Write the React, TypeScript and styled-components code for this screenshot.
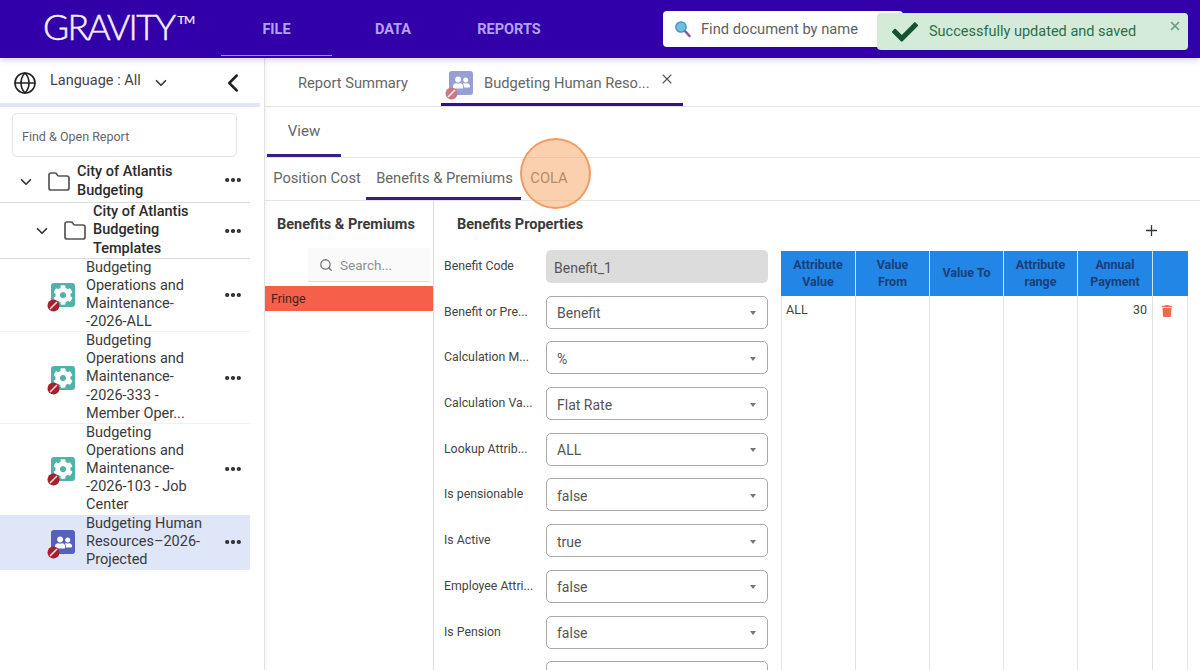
import styled, { createGlobalStyle } from "styled-components"
import { ChevronDown, ChevronLeft, Ellipsis, Folder, Globe, Plus, Search, X } from "lucide-react"
import { FaCheck, FaCog, FaTrash, FaUserFriends } from "react-icons/fa"

const GlobalStyle = createGlobalStyle`
  html, body {
    margin: 0;
    padding: 0;
    height: 670px;
    overflow: hidden;
    background: #fff;
    font-family: Roboto, "Liberation Sans", sans-serif;
  }
  * { box-sizing: border-box; }
`

const Page = styled.div`
  width: 1200px;
  height: 670px;
  display: flex;
  flex-direction: column;
  overflow: hidden;
  position: relative;
`

const Header = styled.header`
  height: 58px;
  flex: none;
  background: #3200a8;
  display: flex;
  align-items: stretch;
  padding-left: 43px;
  box-shadow: 0 2px 6px rgba(80, 70, 200, 0.25);
  position: relative;
  z-index: 2;
`

const Logo = styled.div`
  width: 178px;
  color: #f4effc;
  font-family: Lato, sans-serif;
  font-weight: 300;
  -webkit-text-stroke: 0.55px #f4effc;
  font-size: 35.5px;
  letter-spacing: -1.7px;
  line-height: 54px;
  white-space: nowrap;

  & sup {
    font-size: 12px;
    font-weight: 400;
    letter-spacing: -0.5px;
    margin-left: 3px;
    vertical-align: 16px;
    line-height: 0;
    -webkit-text-stroke: 0.2px #f4effc;
  }
`

const Nav = styled.nav`
  display: flex;
  width: 442px;
`

const NavItem = styled.div<{ $width: number; $active?: boolean }>`
  width: ${(p) => p.$width}px;
  height: 56px;
  display: flex;
  align-items: center;
  justify-content: center;
  padding-top: 3px;
  color: #b5a0f2;
  font-size: 14.5px;
  font-weight: 700;
  border-bottom: 1px solid ${(p) => (p.$active ? "#a78ce8" : "transparent")};
`

const TopSearch = styled.div`
  width: 240px;
  height: 36px;
  margin-top: 11px;
  background: #fff;
  border-radius: 4px;
  display: flex;
  align-items: center;
  gap: 9px;
  padding-left: 11px;
  color: #5f5f5f;
  font-size: 14.7px;
`

const Toast = styled.div`
  position: absolute;
  left: 877px;
  top: 13px;
  width: 311px;
  height: 37px;
  background: #d4ebd9;
  border-radius: 4px;
  display: flex;
  align-items: center;
  padding-left: 15px;
  gap: 11px;
  color: #2c6e49;
  font-size: 14.5px;
  z-index: 3;
`

const ToastClose = styled(X)`
  position: absolute;
  right: 6px;
  top: 6px;
  color: #6f9d83;
`

const Body = styled.div`
  flex: 1;
  display: flex;
  min-height: 0;
`

const Sidebar = styled.aside`
  width: 265px;
  flex: none;
  border-right: 1px solid #e2e2e2;
  box-shadow: 1px 0 3px rgba(0, 0, 0, 0.05);
`

const LanguageRow = styled.div`
  height: 49px;
  width: 260px;
  display: flex;
  align-items: center;
  padding: 4px 0 0 13px;
  border-bottom: 4px solid #e0e6f5;
  color: #444;
  font-size: 14.5px;
`

const LanguageText = styled.span`
  margin: 0 11px 4px 13px;
`

const Collapse = styled(ChevronLeft)`
  margin-left: 48px;
  color: #222;
`

const FindReport = styled.div`
  width: 225px;
  height: 44px;
  margin: 6px 0 0 12px;
  border: 1px solid #e4e4e4;
  border-radius: 5px;
  display: flex;
  align-items: center;
  padding: 2px 0 0 9px;
  color: #666;
  font-size: 12.5px;
`

const Tree = styled.div`
  width: 250px;
`

const TreeRow = styled.div<{ $height: number; $selected?: boolean; $line?: string; $pad?: number }>`
  height: ${(p) => p.$height}px;
  display: flex;
  align-items: center;
  padding-top: ${(p) => p.$pad || 0}px;
  background: ${(p) => (p.$selected ? "#dfe6f8" : "transparent")};
  border-bottom: 1px solid ${(p) => p.$line || "transparent"};
  position: relative;
`

const FolderCell = styled.div<{ $indent: number }>`
  width: ${(p) => p.$indent}px;
  flex: none;
  display: flex;
  align-items: center;
  justify-content: flex-end;
  gap: 12px;
  color: #333;
`

const ItemCell = styled.div`
  width: 86px;
  flex: none;
  display: flex;
  justify-content: flex-end;
  padding-right: 11px;
`

const TreeLabel = styled.div<{ $strong?: boolean; $width: number }>`
  width: ${(p) => p.$width}px;
  color: ${(p) => (p.$strong ? "#2b2b2b" : "#3a3a3a")};
  font-size: 14.5px;
  font-weight: ${(p) => (p.$strong ? 500 : 400)};
  line-height: 18.2px;
  padding-left: ${(p) => (p.$strong ? 6 : 0)}px;
`

const RowMenu = styled(Ellipsis)`
  position: absolute;
  left: 223px;
  top: 50%;
  transform: translateY(-50%);
  color: #222;
  stroke-width: 3;
`

const ReportTile = styled.div<{ $bg: string; $muted?: boolean }>`
  position: relative;
  flex: none;
  width: 24px;
  height: 24px;
  border-radius: 3px;
  background: ${(p) => p.$bg};
  display: flex;
  align-items: center;
  justify-content: center;
  color: #fff;
  opacity: ${(p) => (p.$muted ? 0.6 : 1)};
`

const BanBadge = styled.svg`
  position: absolute;
  left: -4px;
  bottom: -5px;
`

const Main = styled.main`
  flex: 1;
  min-width: 0;
  display: flex;
  flex-direction: column;
  position: relative;
`

const DocTabs = styled.div`
  height: 49px;
  flex: none;
  display: flex;
  border-bottom: 1px solid #e2e2e2;
  padding-left: 33px;
  color: #666;
  font-size: 14.7px;
`

const DocTab = styled.div<{ $active?: boolean }>`
  height: 48px;
  display: flex;
  align-items: center;
  position: relative;
  white-space: nowrap;
  padding-top: 4px;
  ${(p) =>
    p.$active
      ? `width: 242px; margin-left: 34px; padding-left: 8px; gap: 11px; border-bottom: 3px solid #32128c;`
      : `width: 109px; padding-top: 2px;`}
`

const TabClose = styled(X)`
  position: absolute;
  left: 218px;
  top: 13px;
  color: #555;
`

const ViewBar = styled.div`
  height: 51px;
  flex: none;
  padding-left: 2px;
  border-bottom: 1px solid #e5e5e5;
`

const ViewTab = styled.div`
  width: 74px;
  height: 50px;
  display: flex;
  align-items: center;
  justify-content: center;
  padding-top: 1px;
  border-bottom: 3px solid #3a1d8a;
  color: #666;
  font-size: 15px;
`

const SubTabs = styled.div`
  height: 43px;
  flex: none;
  display: flex;
  padding-left: 1px;
  border-bottom: 1px solid #e5e5e5;
  color: #666;
  font-size: 14.7px;
`

const SubTab = styled.div<{ $width: number; $active?: boolean }>`
  width: ${(p) => p.$width}px;
  height: 42px;
  display: flex;
  align-items: center;
  justify-content: center;
  padding: 1px 0 0 2px;
  border-bottom: 3px solid ${(p) => (p.$active ? "#3a1d8a" : "transparent")};
`

const Highlight = styled.div`
  position: absolute;
  left: 255px;
  top: 80px;
  width: 71px;
  height: 71px;
  border-radius: 50%;
  background: rgba(245, 170, 110, 0.55);
  border: 2px solid rgba(240, 150, 90, 0.9);
`

const Content = styled.div`
  flex: 1;
  min-height: 0;
  display: flex;
`

const BenefitList = styled.section`
  width: 169px;
  flex: none;
  border-right: 1px solid #dcdcdc;
`

const SectionTitle = styled.h3`
  margin: 0;
  font-size: 14.5px;
  font-weight: 700;
  color: #3a3a3a;
`

const ListTitle = styled(SectionTitle)`
  padding: 15px 0 0 12px;
  height: 47px;
`

const ListSearch = styled.div`
  width: 122px;
  height: 34px;
  margin-left: 43px;
  padding-left: 11px;
  display: flex;
  align-items: center;
  gap: 7px;
  background: #fafafa;
  border-bottom: 1px solid #ddd;
  color: #8f8f8f;
  font-size: 13.5px;
`

const FringeRow = styled.div`
  height: 25px;
  margin-top: 4px;
  background: #f4604a;
  padding-left: 6px;
  display: flex;
  align-items: center;
  color: #4a2018;
  font-size: 12.5px;
`

const Properties = styled.section`
  flex: 1;
  min-width: 0;
  display: flex;
  flex-direction: column;
  padding: 15px 12px 0 10px;
`

const PropertiesHead = styled.div`
  height: 34px;
  flex: none;
  display: flex;
  justify-content: space-between;
  padding-left: 13px;
`

const AddIcon = styled(Plus)`
  margin: 6px 28px 0 0;
  color: #333;
`

const Columns = styled.div`
  flex: 1;
  min-height: 0;
  display: flex;
  gap: 13px;
`

const Form = styled.div`
  width: 324px;
  flex: none;
  display: flex;
  flex-direction: column;
  gap: 12.7px;
`

const Field = styled.div`
  display: flex;
  align-items: flex-start;
`

const FieldLabel = styled.label`
  width: 102px;
  flex: none;
  padding-top: 9px;
  color: #444;
  font-size: 12.3px;
  line-height: 15px;
`

const DisabledInput = styled.div`
  width: 222px;
  height: 33px;
  background: #dcdcdc;
  border-radius: 5px;
  padding: 2px 0 0 8px;
  display: flex;
  align-items: center;
  color: #555;
  font-size: 14px;
`

const Select = styled.div`
  width: 222px;
  height: 33px;
  border: 1px solid #a9a9a9;
  border-radius: 5px;
  padding: 2px 11px 0 10px;
  display: flex;
  align-items: center;
  justify-content: space-between;
  color: #555;
  font-size: 14px;
`

const Caret = styled.span`
  width: 0;
  height: 0;
  border-left: 3.5px solid transparent;
  border-right: 3.5px solid transparent;
  border-top: 4px solid #777;
`

const Grid = styled.div`
  width: 407px;
  flex: none;
  height: 440px;
  margin-top: 1px;
  display: flex;
  flex-direction: column;
`

const GridHead = styled.div`
  height: 45px;
  flex: none;
  display: flex;
  background: #2286e6;
`

const HeadCell = styled.div<{ $width: number }>`
  width: ${(p) => p.$width}px;
  flex: none;
  display: flex;
  align-items: center;
  justify-content: center;
  text-align: center;
  border-right: 1px solid #cfe5fa;
  color: #1a3f78;
  font-size: 12.5px;
  font-weight: 700;
  line-height: 16.5px;
  &:last-child { border-right: none; }
`

const GridRow = styled.div`
  flex: 1;
  display: flex;
  border-left: 1px solid #e3e3e3;
  border-right: 1px solid #e3e3e3;
`

const BodyCell = styled.div<{ $width: number; $right?: boolean }>`
  width: ${(p) => p.$width}px;
  flex: none;
  padding: 6px 5px 0 4px;
  border-right: 1px solid #e3e3e3;
  color: #444;
  font-size: 12.5px;
  line-height: 15px;
  text-align: ${(p) => (p.$right ? "right" : "left")};
  &:last-child { border-right: none; }
`

const Trash = styled(FaTrash)`
  margin: 3px 0 0 4px;
  color: #ee6a50;
`

const columns = [
  { title: ["Attribute", "Value"], width: 75 },
  { title: ["Value", "From"], width: 74 },
  { title: ["Value To"], width: 74 },
  { title: ["Attribute", "range"], width: 74 },
  { title: ["Annual", "Payment"], width: 75 },
  { title: [], width: 35 },
]

const fields = [
  { label: "Benefit or Pre...", value: "Benefit" },
  { label: "Calculation M...", value: "%" },
  { label: "Calculation Va...", value: "Flat Rate" },
  { label: "Lookup Attrib...", value: "ALL" },
  { label: "Is pensionable", value: "false" },
  { label: "Is Active", value: "true" },
  { label: "Employee Attri...", value: "false" },
  { label: "Is Pension", value: "false" },
  { label: "", value: "" },
]

const reports = [
  { lines: ["Budgeting", "Operations and", "Maintenance-", "-2026-ALL"], height: 73, line: "#f0f0f0" },
  { lines: ["Budgeting", "Operations and", "Maintenance-", "-2026-333 -", "Member Oper..."], height: 92, line: "#f0f0f0" },
  { lines: ["Budgeting", "Operations and", "Maintenance-", "-2026-103 - Job", "Center"], height: 91, line: "transparent" },
]

const Lines = ({ lines }: { lines: string[] }) => (
  <>
    {lines.map((l) => (
      <div key={l}>{l}</div>
    ))}
  </>
)

const ReportIcon = ({ kind, muted }: { kind: "gear" | "people"; muted?: boolean }) => (
  <ReportTile $bg={kind === "gear" ? "#4fb3a8" : "#5561bb"} $muted={muted}>
    {kind === "gear" ? <FaCog size={20} /> : <FaUserFriends size={17} />}
    <BanBadge width="13" height="13" viewBox="0 0 13 13">
      <circle cx="6.5" cy="6.5" r="6" fill="#a8202e" />
      <line x1="3" y1="10" x2="10" y2="3" stroke="#f3dfe0" strokeWidth="1.6" />
    </BanBadge>
  </ReportTile>
)

const Magnifier = () => (
  <svg width="18" height="18" viewBox="0 0 18 18">
    <line x1="10.5" y1="10.5" x2="15.5" y2="16" stroke="#8a5a9a" strokeWidth="2.6" strokeLinecap="round" />
    <circle cx="7" cy="7" r="5.2" fill="#6cc0e4" stroke="#4a8fb8" strokeWidth="1.3" />
  </svg>
)

export default function App() {
  return (
    <Page>
      <GlobalStyle />
      <Header>
        <Logo>
          GRAVITY<sup>TM</sup>
        </Logo>
        <Nav>
          <NavItem $width={111} $active>FILE</NavItem>
          <NavItem $width={122}>DATA</NavItem>
          <NavItem $width={110}>REPORTS</NavItem>
        </Nav>
        <TopSearch>
          <Magnifier />
          Find document by name
        </TopSearch>
      </Header>
      <Toast>
        <FaCheck size={26} color="#14532d" />
        Successfully updated and saved
        <ToastClose size={14} strokeWidth={3} />
      </Toast>

      <Body>
        <Sidebar>
          <LanguageRow>
            <Globe size={24} strokeWidth={1.6} color="#222" />
            <LanguageText>Language : All</LanguageText>
            <ChevronDown size={18} strokeWidth={2.2} color="#333" />
            <Collapse size={30} strokeWidth={2} />
          </LanguageRow>
          <FindReport>Find &amp; Open Report</FindReport>
          <Tree>
            <TreeRow $height={46} $pad={4} $line="#dcdcdc">
              <FolderCell $indent={71}>
                <ChevronDown size={18} strokeWidth={2.2} />
                <Folder size={24} strokeWidth={1.7} color="#555" />
              </FolderCell>
              <TreeLabel $strong $width={130}>
                <Lines lines={["City of Atlantis", "Budgeting"]} />
              </TreeLabel>
              <RowMenu size={20} />
            </TreeRow>
            <TreeRow $height={56} $line="#dcdcdc">
              <FolderCell $indent={87}>
                <ChevronDown size={18} strokeWidth={2.2} />
                <Folder size={24} strokeWidth={1.7} color="#555" />
              </FolderCell>
              <TreeLabel $strong $width={125}>
                <Lines lines={["City of Atlantis", "Budgeting", "Templates"]} />
              </TreeLabel>
              <RowMenu size={20} />
            </TreeRow>
            {reports.map((r) => (
              <TreeRow key={r.lines.join()} $height={r.height} $line={r.line}>
                <ItemCell>
                  <ReportIcon kind="gear" />
                </ItemCell>
                <TreeLabel $width={125}>
                  <Lines lines={r.lines} />
                </TreeLabel>
                <RowMenu size={20} />
              </TreeRow>
            ))}
            <TreeRow $height={55} $selected>
              <ItemCell>
                <ReportIcon kind="people" />
              </ItemCell>
              <TreeLabel $width={125}>
                <Lines lines={["Budgeting Human", "Resources–2026-", "Projected"]} />
              </TreeLabel>
              <RowMenu size={20} />
            </TreeRow>
          </Tree>
        </Sidebar>

        <Main>
          <DocTabs>
            <DocTab>Report Summary</DocTab>
            <DocTab $active>
              <ReportIcon kind="people" muted />
              Budgeting Human Reso...
              <TabClose size={16} strokeWidth={1.6} />
            </DocTab>
          </DocTabs>
          <ViewBar>
            <ViewTab>View</ViewTab>
          </ViewBar>
          <SubTabs>
            <SubTab $width={100}>Position Cost</SubTab>
            <SubTab $width={155} $active>Benefits &amp; Premiums</SubTab>
            <SubTab $width={54}>COLA</SubTab>
          </SubTabs>
          <Highlight />
          <Content>
            <BenefitList>
              <ListTitle>Benefits &amp; Premiums</ListTitle>
              <ListSearch>
                <Search size={14} color="#777" strokeWidth={2.2} />
                Search...
              </ListSearch>
              <FringeRow>Fringe</FringeRow>
            </BenefitList>
            <Properties>
              <PropertiesHead>
                <SectionTitle>Benefits Properties</SectionTitle>
                <AddIcon size={17} strokeWidth={1.8} />
              </PropertiesHead>
              <Columns>
                <Form>
                  <Field>
                    <FieldLabel>Benefit Code</FieldLabel>
                    <DisabledInput>Benefit_1</DisabledInput>
                  </Field>
                  {fields.map((f, i) => (
                    <Field key={i}>
                      <FieldLabel>{f.label}</FieldLabel>
                      <Select>
                        {f.value}
                        <Caret />
                      </Select>
                    </Field>
                  ))}
                </Form>
                <Grid>
                  <GridHead>
                    {columns.map((c, i) => (
                      <HeadCell key={i} $width={c.width}>
                        <div>
                          <Lines lines={c.title} />
                        </div>
                      </HeadCell>
                    ))}
                  </GridHead>
                  <GridRow>
                    <BodyCell $width={74}>ALL</BodyCell>
                    <BodyCell $width={74} />
                    <BodyCell $width={74} />
                    <BodyCell $width={74} />
                    <BodyCell $width={75} $right>30</BodyCell>
                    <BodyCell $width={34}>
                      <Trash size={12} />
                    </BodyCell>
                  </GridRow>
                </Grid>
              </Columns>
            </Properties>
          </Content>
        </Main>
      </Body>
    </Page>
  )
}
